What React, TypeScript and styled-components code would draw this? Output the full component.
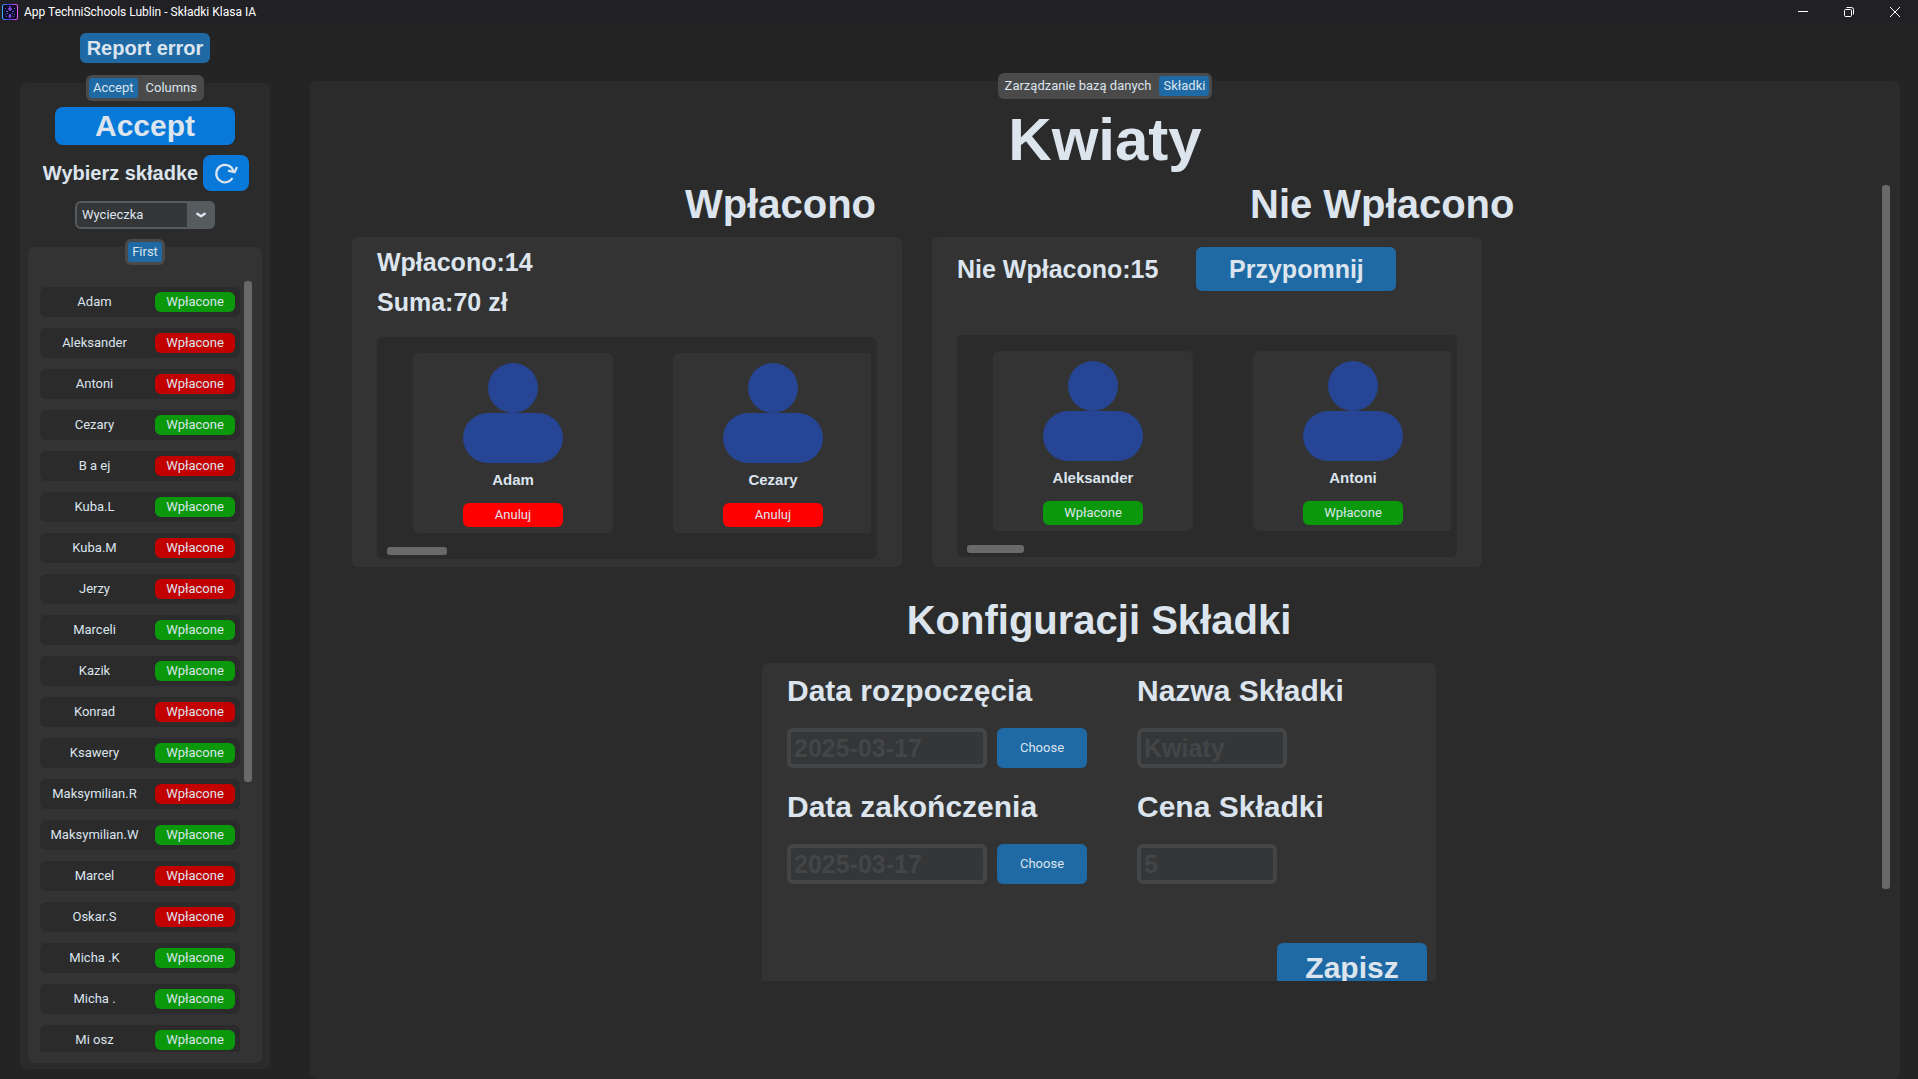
import React, { useState } from 'react';
import styled, { createGlobalStyle } from 'styled-components';

const color = {
  window: '#242424',
  titleBar: '#202025',
  panel: '#2b2b2b',
  raised: '#333333',
  text: '#dce4ee',
  blue: '#1f6aa5',
  bright: '#0979d9',
  segment: '#4a4a4a',
  thumb: '#696969',
  line: '#565b5e',
  field: '#343638',
  fieldLine: '#434547',
  green: '#0b990b',
  darkRed: '#c20000',
  red: '#ff0000',
  avatar: '#264594',
};

const GlobalStyle = createGlobalStyle`
  *, *::before, *::after { box-sizing: border-box; }
  body { margin: 0; background: ${color.window}; }
  button, input, select { font: inherit; color: inherit; margin: 0; padding: 0; border: 0; }
  h1, h2, p, ul { margin: 0; padding: 0; }
`;

const Window = styled.div`
  display: flex;
  flex-direction: column;
  height: 100vh;
  overflow: hidden;
  background: ${color.window};
  color: ${color.text};
  font: 400 13px/16px Roboto, 'Liberation Sans', sans-serif;
`;

const TitleBar = styled.header`
  display: flex;
  align-items: center;
  flex: none;
  height: 23px;
  padding: 0 11px 0 2px;
  gap: 6px;
  background: ${color.titleBar};
  color: #ffffff;
  font: 400 12px/16px Roboto, 'Liberation Sans', sans-serif;
`;

const WindowTitle = styled.span`
  flex: 1;
`;

const WindowControls = styled.div`
  display: flex;
  gap: 22px;
`;

const WindowButton = styled.button`
  display: flex;
  align-items: center;
  justify-content: center;
  width: 24px;
  height: 20px;
  background: transparent;
`;

const Body = styled.div`
  display: flex;
  flex: 1;
  min-height: 0;
  gap: 40px;
  padding: 0 18px 0 20px;
`;

const Sidebar = styled.aside`
  display: flex;
  flex-direction: column;
  align-items: center;
  flex: none;
  width: 250px;
  padding: 10px 0;
  gap: 12px;
`;

const Button = styled.button<{ $size?: number; $w: number; $h: number; $tone?: string; $radius?: number }>`
  display: flex;
  align-items: center;
  justify-content: center;
  flex: none;
  width: ${(p) => p.$w}px;
  height: ${(p) => p.$h}px;
  border-radius: ${(p) => p.$radius ?? 6}px;
  background: ${(p) => p.$tone ?? color.blue};
  ${(p) => p.$size && `font: 700 ${p.$size}px/${p.$size + 4}px 'Liberation Sans', Arial, sans-serif;`}
`;

const TabView = styled.div<{ $raised?: boolean }>`
  display: flex;
  flex-direction: column;
  align-items: center;
  align-self: stretch;
  flex: 1;
  min-width: 0;
  min-height: 0;
  margin-top: 8px;
  border-radius: 6px;
  background: ${(p) => (p.$raised ? color.raised : color.panel)};
`;

const Segments = styled.div`
  display: flex;
  flex: none;
  gap: 4px;
  height: 26px;
  margin-top: -8px;
  padding: 3px;
  border-radius: 6px;
  background: ${color.segment};
`;

const Segment = styled.button<{ $active?: boolean }>`
  padding: 0 4px;
  border-radius: 3px;
  background: ${(p) => (p.$active ? color.blue : 'transparent')};
`;

const AcceptSlot = styled.div`
  padding-top: 6px;
`;

const PickRow = styled.div`
  display: flex;
  align-items: center;
  gap: 5px;
  margin: 10px 0;
  padding-left: 2px;
`;

const PickLabel = styled.label`
  font: 700 20px/24px 'Liberation Sans', Arial, sans-serif;
`;

const SelectBox = styled.div`
  display: grid;
  flex: none;
  width: 140px;
  height: 28px;
  margin-bottom: 10px;
`;

const Select = styled.select`
  grid-area: 1 / 1;
  appearance: none;
  padding-left: 5px;
  border: 2px solid ${color.line};
  border-radius: 6px;
  background: ${color.field};
`;

const SelectArrow = styled.span`
  grid-area: 1 / 1;
  justify-self: end;
  display: flex;
  align-items: center;
  justify-content: center;
  width: 28px;
  border-radius: 0 6px 6px 0;
  background: ${color.line};
  pointer-events: none;
`;

const ListSlot = styled.div`
  display: flex;
  flex: 1;
  align-self: stretch;
  min-height: 0;
  padding: 0 8px 6px;
`;

const PeopleScroll = styled.div`
  display: flex;
  flex: 1;
  align-self: stretch;
  min-height: 0;
  gap: 4px;
  margin: 16px 10px 11px 12px;
  overflow: hidden;
`;

const People = styled.ul`
  display: flex;
  flex-direction: column;
  flex: 1;
  gap: 11px;
  padding-top: 6px;
  list-style: none;
`;

const Person = styled.li`
  display: flex;
  align-items: center;
  flex: none;
  height: 30px;
  padding-right: 5px;
  border-radius: 6px;
  background: ${color.panel};
`;

const PersonName = styled.span`
  flex: 1;
  padding-right: 6px;
  text-align: center;
`;

const VerticalThumb = styled.div<{ $share: number }>`
  flex: none;
  width: 8px;
  height: ${(p) => p.$share}%;
  border-radius: 3px;
  background: ${color.thumb};
`;

const Main = styled.main`
  display: flex;
  flex: 1;
  min-width: 0;
  padding-top: 50px;
`;

const Heading = styled.h1`
  margin-top: 6px;
  font: 700 60px/70px 'Liberation Sans', Arial, sans-serif;
`;

const ScrollArea = styled.div`
  display: flex;
  flex: 1;
  align-self: stretch;
  justify-content: space-between;
  min-height: 0;
  padding: 10px 10px 98px 42px;
`;

const Content = styled.div`
  display: flex;
  flex-direction: column;
  align-items: center;
  flex: 1;
  min-width: 0;
  margin-top: -4px;
  padding-right: 36px;
  overflow: hidden;
`;

const Columns = styled.div`
  display: flex;
  align-self: stretch;
  gap: 30px;
`;

const Column = styled.section`
  display: flex;
  flex-direction: column;
  width: 550px;
`;

const SubHeading = styled.h2`
  font: 700 40px/46px 'Liberation Sans', Arial, sans-serif;
`;

const LeftTitle = styled(SubHeading)`
  padding: 0 26px 10px 0;
  text-align: right;
`;

const RightTitle = styled(SubHeading)`
  padding: 0 0 10px 318px;
  white-space: nowrap;
`;

const Card = styled.div<{ $bottom: number }>`
  display: flex;
  flex-direction: column;
  justify-content: space-between;
  height: 330px;
  padding: 10px 25px ${(p) => p.$bottom}px;
  border-radius: 6px;
  background: ${color.raised};
`;

const Stats = styled.div`
  display: flex;
  flex-direction: column;
  gap: 10px;
  font: 700 25px/30px 'Liberation Sans', Arial, sans-serif;
`;

const Reminder = styled.div`
  display: flex;
  align-items: center;
  gap: 38px;
  font: 700 25px/30px 'Liberation Sans', Arial, sans-serif;
`;

const Strip = styled.div`
  display: flex;
  flex-direction: column;
  justify-content: space-between;
  height: 222px;
  padding: 16px 6px 4px 10px;
  border-radius: 6px;
  background: ${color.panel};
`;

const StripItems = styled.div`
  display: flex;
  gap: 60px;
  padding-left: 26px;
  overflow: hidden;
`;

const Member = styled.article`
  display: flex;
  flex-direction: column;
  align-items: center;
  flex: none;
  width: 200px;
  height: 180px;
  padding: 10px 0 6px;
  border-radius: 6px;
  background: ${color.raised};
`;

const MemberName = styled.p`
  flex: 1;
  padding-top: 8px;
  font: 700 15px/18px 'Liberation Sans', Arial, sans-serif;
`;

const HorizontalThumb = styled.div<{ $w: number }>`
  width: ${(p) => p.$w}px;
  height: 8px;
  border-radius: 3px;
  background: ${color.thumb};
`;

const ConfigTitle = styled(SubHeading)`
  margin: 30px 0 20px;
`;

const Config = styled.form`
  display: grid;
  grid-template-columns: 350px 290px;
  align-content: start;
  row-gap: 16px;
  flex: none;
  width: 674px;
  padding: 10px 9px 10px 25px;
  border-radius: 6px;
  background: ${color.raised};
`;

const Field = styled.div`
  display: flex;
  flex-direction: column;
  align-items: flex-start;
  gap: 19px;
  height: 100px;
`;

const FieldLabel = styled.label`
  font: 700 30px/36px 'Liberation Sans', Arial, sans-serif;
`;

const FieldRow = styled.div`
  display: flex;
  gap: 10px;
`;

const TextInput = styled.input<{ $w: number }>`
  width: ${(p) => p.$w}px;
  height: 40px;
  padding: 0 3px;
  border: 4px solid ${color.fieldLine};
  border-radius: 6px;
  background: ${color.field};
  color: ${color.fieldLine};
  font: 700 25px/30px 'Liberation Sans', Arial, sans-serif;
  outline: none;
`;

const SaveRow = styled.div`
  grid-column: 1 / -1;
  display: flex;
  justify-content: flex-end;
  padding-top: 38px;
`;

const AppIcon = () => (
  <svg width="16" height="16" viewBox="0 0 16 16" fill="none" aria-hidden="true">
    <defs>
      <linearGradient id="frame" x1="0" y1="0" x2="16" y2="0" gradientUnits="userSpaceOnUse">
        <stop offset="0" stopColor="#3fb4ff" />
        <stop offset="0.35" stopColor="#3a45e8" />
        <stop offset="0.65" stopColor="#9a3df0" />
        <stop offset="1" stopColor="#f060f0" />
      </linearGradient>
    </defs>
    <rect x="0.5" y="0.5" width="15" height="15" rx="1.5" fill="#100d28" stroke="url(#frame)" />
    <path d="M8 2v5M6 5h4M8 10v4M6.500 12h3" stroke="#8a4be8" strokeWidth="1.500" />
    <path d="M3 4.500h1M12 4.500h1M4 7.500h2M10 7.500h2M3 10.500h1M12 10.500h1M5 9.500h1M10 9.500h1M4 12.500h1M11 12.500h1" stroke="#5a50d8" />
  </svg>
);

const RefreshIcon = () => (
  <svg width="24" height="24" viewBox="0 0 24 24" fill="none" stroke={color.text} strokeWidth="2.200" aria-hidden="true">
    <path d="M19.400 10.400A8.700 8.700 0 1 0 18.500 17" />
    <path d="M14 9.600L20.600 11.200L23 6" />
  </svg>
);

const Chevron = () => (
  <svg width="10" height="6" viewBox="0 0 10 6" fill="none" stroke={color.text} strokeWidth="2.400" strokeLinecap="round" strokeLinejoin="round" aria-hidden="true">
    <path d="M1.300 1.700L5 4.200L8.700 1.700" />
  </svg>
);

const Avatar = () => (
  <svg width="100" height="100" viewBox="0 0 100 100" fill={color.avatar} aria-hidden="true">
    <circle cx="50" cy="25" r="25" />
    <rect y="50" width="100" height="50" rx="25" />
  </svg>
);

const people: [string, boolean][] = [
  ['Adam', true],
  ['Aleksander', false],
  ['Antoni', false],
  ['Cezary', true],
  ['B a ej', false],
  ['Kuba.L', true],
  ['Kuba.M', false],
  ['Jerzy', false],
  ['Marceli', true],
  ['Kazik', true],
  ['Konrad', false],
  ['Ksawery', true],
  ['Maksymilian.R', false],
  ['Maksymilian.W', true],
  ['Marcel', false],
  ['Oskar.S', false],
  ['Micha .K', true],
  ['Micha .', true],
  ['Mi osz', true],
];

function MemberStrip({ names, action, tone, thumb }: { names: string[]; action: string; tone: string; thumb: number }) {
  return (
    <Strip>
      <StripItems>
        {names.map((name) => (
          <Member key={name}>
            <Avatar />
            <MemberName>{name}</MemberName>
            <Button $w={100} $h={24} $tone={tone}>{action}</Button>
          </Member>
        ))}
      </StripItems>
      <HorizontalThumb $w={thumb} />
    </Strip>
  );
}

function TextField({ id, label, initial, width, pick }: { id: string; label: string; initial: string; width: number; pick?: boolean }) {
  const [value, setValue] = useState(initial);
  return (
    <Field>
      <FieldLabel htmlFor={id}>{label}</FieldLabel>
      <FieldRow>
        <TextInput id={id} $w={width} value={value} onChange={(e) => setValue(e.target.value)} />
        {pick && <Button type="button" $w={90} $h={40}>Choose</Button>}
      </FieldRow>
    </Field>
  );
}

function FundPicker() {
  return (
    <>
      <AcceptSlot>
        <Button $w={180} $h={38} $size={30} $tone={color.bright} $radius={8}>Accept</Button>
      </AcceptSlot>
      <PickRow>
        <PickLabel htmlFor="fund">Wybierz składke</PickLabel>
        <Button aria-label="Odśwież" $w={46} $h={36} $tone={color.bright} $radius={8}><RefreshIcon /></Button>
      </PickRow>
      <SelectBox>
        <Select id="fund" defaultValue="Wycieczka">
          <option>Wycieczka</option>
          <option>Kwiaty</option>
        </Select>
        <SelectArrow><Chevron /></SelectArrow>
      </SelectBox>
    </>
  );
}

export default function App() {
  return (
    <Window>
      <GlobalStyle />
      <TitleBar>
        <AppIcon />
        <WindowTitle>App TechniSchools Lublin - Składki Klasa IA</WindowTitle>
        <WindowControls>
          <WindowButton aria-label="Minimize">
            <svg width="10" height="10" viewBox="0 0 10 10" stroke="#fff"><path d="M0 4.500h10" /></svg>
          </WindowButton>
          <WindowButton aria-label="Restore">
            <svg width="10" height="10" viewBox="0 0 10 10" fill="none" stroke="#fff">
              <rect x="0.500" y="2.500" width="7" height="7" rx="1" />
              <path d="M2.500 0.500h5a2 2 0 0 1 2 2v5" />
            </svg>
          </WindowButton>
          <WindowButton aria-label="Close">
            <svg width="10" height="10" viewBox="0 0 10 10" stroke="#fff"><path d="M0 0l10 10M10 0L0 10" /></svg>
          </WindowButton>
        </WindowControls>
      </TitleBar>
      <Body>
        <Sidebar>
          <Button $w={130} $h={30} $size={20}>Report error</Button>
          <TabView>
            <Segments>
              <Segment $active>Accept</Segment>
              <Segment>Columns</Segment>
            </Segments>
            <FundPicker />
            <ListSlot>
              <TabView $raised>
                <Segments>
                  <Segment $active>First</Segment>
                </Segments>
                <PeopleScroll>
                  <People>
                    {people.map(([name, paid]) => (
                      <Person key={name}>
                        <PersonName>{name}</PersonName>
                        <Button $w={80} $h={20} $tone={paid ? color.green : color.darkRed}>Wpłacone</Button>
                      </Person>
                    ))}
                  </People>
                  <VerticalThumb $share={65} />
                </PeopleScroll>
              </TabView>
            </ListSlot>
          </TabView>
        </Sidebar>
        <Main>
          <TabView>
            <Segments>
              <Segment>Zarządzanie bazą danych</Segment>
              <Segment $active>Składki</Segment>
            </Segments>
            <Heading>Kwiaty</Heading>
            <ScrollArea>
              <Content>
                <Columns>
                  <Column>
                    <LeftTitle>Wpłacono</LeftTitle>
                    <Card $bottom={8}>
                      <Stats>
                        <p>Wpłacono:14</p>
                        <p>Suma:70 zł</p>
                      </Stats>
                      <MemberStrip names={['Adam', 'Cezary']} action="Anuluj" tone={color.red} thumb={60} />
                    </Card>
                  </Column>
                  <Column>
                    <RightTitle>Nie Wpłacono</RightTitle>
                    <Card $bottom={10}>
                      <Reminder>
                        <p>Nie Wpłacono:15</p>
                        <Button $w={200} $h={44} $size={25}>Przypomnij</Button>
                      </Reminder>
                      <MemberStrip names={['Aleksander', 'Antoni']} action="Wpłacone" tone={color.green} thumb={57} />
                    </Card>
                  </Column>
                </Columns>
                <ConfigTitle>Konfiguracji Składki</ConfigTitle>
                <Config onSubmit={(e) => e.preventDefault()}>
                  <TextField id="start" label="Data rozpoczęcia" initial="2025-03-17" width={200} pick />
                  <TextField id="name" label="Nazwa Składki" initial="Kwiaty" width={150} />
                  <TextField id="end" label="Data zakończenia" initial="2025-03-17" width={200} pick />
                  <TextField id="price" label="Cena Składki" initial="5" width={140} />
                  <SaveRow>
                    <Button $w={150} $h={50} $size={30}>Zapisz</Button>
                  </SaveRow>
                </Config>
              </Content>
              <VerticalThumb $share={88.4} />
            </ScrollArea>
          </TabView>
        </Main>
      </Body>
    </Window>
  );
}
